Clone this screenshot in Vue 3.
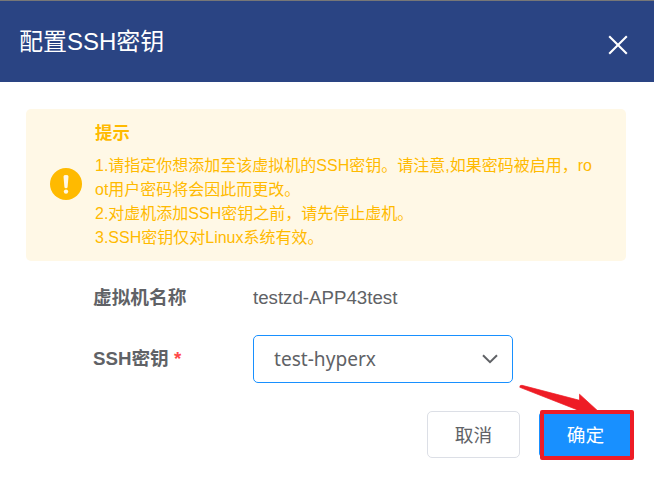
<script setup>
const tips = [
  '1.请指定你想添加至该虚拟机的SSH密钥。请注意,如果密码被启用，ro',
  'ot用户密码将会因此而更改。',
  '2.对虚机添加SSH密钥之前，请先停止虚机。',
  '3.SSH密钥仅对Linux系统有效。',
]
</script>

<template>
  <div class="dialog">
    <header class="header">
      <h1 class="title">配置SSH密钥</h1>
      <button class="close" aria-label="关闭">
        <svg width="20" height="20" viewBox="0 0 20 20" fill="none" stroke="#fff" stroke-width="2.1">
          <path d="M1.2 1.2 18.8 18.8M18.8 1.2 1.2 18.8" />
        </svg>
      </button>
    </header>

    <main class="body">
      <section class="alert">
        <svg class="alert-icon" width="32" height="32" viewBox="0 0 32 32">
          <circle cx="16" cy="16" r="16" fill="#ffba00" />
          <path d="M13.5 8.4Q13.5 7.1 16 7.1T18.5 8.4L17.6 19Q17.5 20.2 16 20.2T14.4 19Z" fill="#fff8e6" />
          <circle cx="16" cy="23.6" r="2.2" fill="#fff8e6" />
        </svg>
        <div class="alert-text">
          <h2 class="alert-title">提示</h2>
          <p v-for="tip in tips" :key="tip" class="tip">{{ tip }}</p>
        </div>
      </section>

      <div class="row name-row">
        <span class="label">虚拟机名称</span>
        <span class="value">testzd-APP43test</span>
      </div>
      <div class="row key-row">
        <span class="label">SSH密钥 <span class="required">*</span></span>
        <div class="select">
          <span>test-hyperx</span>
          <svg width="16" height="10" viewBox="0 0 16 10" fill="none" stroke="#606266" stroke-width="2">
            <path d="M1 1.2 8 8.2 15 1.2" />
          </svg>
        </div>
      </div>

      <footer class="footer">
        <button class="btn cancel">取消</button>
        <button class="btn confirm">确定</button>
      </footer>
    </main>

    <svg class="arrow" width="90" height="40" viewBox="0 0 90 40">
      <path d="M.8 4.3Q.5 2 3 2.3L60.5 17.3V11.2L80 29V30H55L58 26.7Z" fill="#ee1c25" stroke="#ee1c25" stroke-width=".7" />
    </svg>
    <div class="highlight"></div>
  </div>
</template>

<style>
body {
  margin: 0;
  background: #fff;
}
</style>

<style scoped>
.dialog {
  position: relative;
  box-sizing: border-box;
  width: 654px;
  height: 478px;
  overflow: hidden;
  border-top: 1px solid #777;
  background: #fff;
  color: #606266;
  font-family: "Liberation Sans", "Noto Sans CJK SC", sans-serif;
}
h1, h2, p {
  margin: 0;
}
button {
  margin: 0;
  font-family: inherit;
}
.header {
  display: flex;
  box-sizing: border-box;
  height: 81px;
  padding: 0 26px 0 19px;
  align-items: center;
  justify-content: space-between;
  background: #2a4483;
}
.title {
  color: #fff;
  font-size: 24px;
  font-weight: 400;
  line-height: 36px;
  white-space: nowrap;
}
.close {
  display: flex;
  padding: 7px 0 0;
  border: 0;
  background: none;
}
.body {
  padding: 27px 28px 0 26px;
}
.alert {
  display: flex;
  box-sizing: border-box;
  height: 152px;
  padding: 0 24px;
  border-radius: 5px;
  background: #fff8e6;
  color: #ffba00;
}
.alert-icon {
  flex: none;
  margin-top: 59px;
}
.alert-text {
  padding: 12px 0 0 13px;
}
.alert-title {
  height: 33px;
  font-size: 17.4px;
  font-weight: 700;
  line-height: 24px;
}
.tip {
  font-size: 16px;
  line-height: 24px;
  white-space: nowrap;
}
.row {
  display: flex;
  padding-left: 67px;
  align-items: center;
}
.name-row {
  height: 74px;
}
.key-row {
  height: 48px;
}
.label {
  width: 160px;
  padding-bottom: 5px;
  font-size: 18.7px;
  font-weight: 700;
  white-space: nowrap;
}
.required {
  color: #ff4949;
}
.value {
  font-size: 18.7px;
}
.select {
  display: flex;
  box-sizing: border-box;
  width: 260px;
  height: 48px;
  padding: 0 14px 0 20px;
  border: 1px solid #1890ff;
  border-radius: 5px;
  align-items: center;
  justify-content: space-between;
  font-family: "Noto Sans", sans-serif;
  font-size: 19.1px;
}
.footer {
  display: flex;
  padding: 28px 0 0 401px;
  gap: 19px;
}
.btn {
  flex: none;
  box-sizing: border-box;
  width: 93px;
  height: 47px;
  padding: 0 0 2px;
  border: 1px solid #dcdfe6;
  border-radius: 5px;
  font-size: 18.7px;
}
.cancel {
  background: #fff;
  color: #606266;
}
.confirm {
  border-color: #1890ff;
  background: #1890ff;
  color: #fff;
}
.arrow {
  position: absolute;
  left: 519px;
  top: 382px;
}
.highlight {
  position: absolute;
  box-sizing: border-box;
  left: 540px;
  top: 409px;
  width: 94px;
  height: 50px;
  border: 4px solid #ee1c25;
  border-radius: 2px;
}
</style>
